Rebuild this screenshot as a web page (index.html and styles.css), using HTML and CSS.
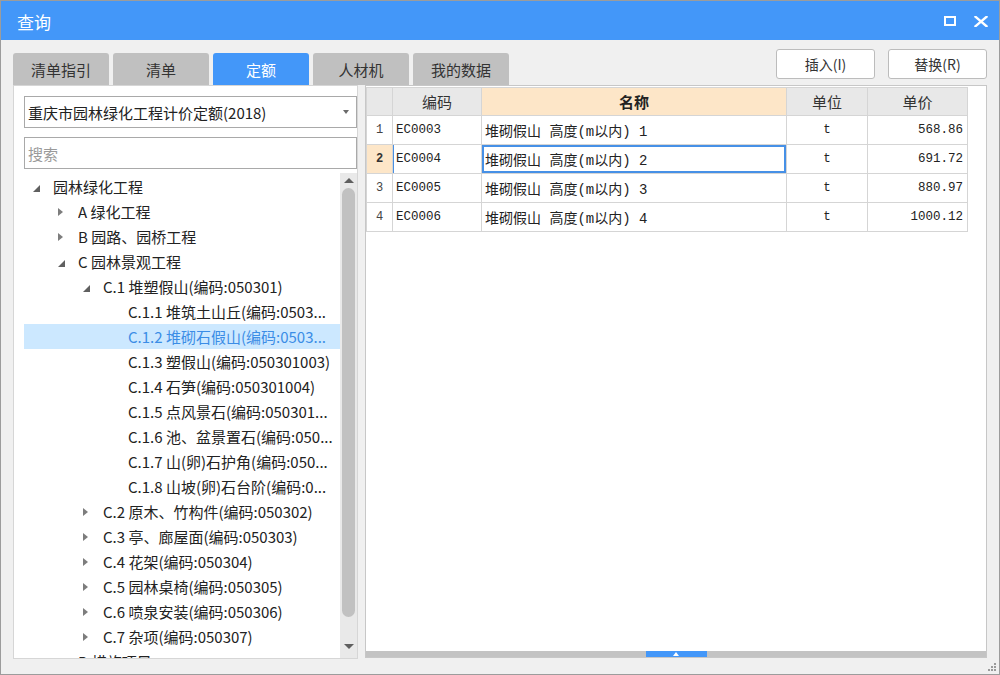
FILE: index.html
```html
<!DOCTYPE html>
<html lang="zh-CN">
<head>
<meta charset="utf-8">
<title>查询</title>
<link rel="stylesheet" href="styles.css">
</head>
<body>
<div class="window">
  <div class="titlebar">
    <span class="title">查询</span>
    <div class="win-ctrls">
      <svg class="ic-max" width="12" height="10" viewBox="0 0 12 10"><rect x="1" y="1" width="10" height="8" fill="none" stroke="#fff" stroke-width="2"/></svg>
      <svg class="ic-close" width="14" height="11" viewBox="0 0 14 11"><path d="M1.5 0.8 L12.5 10.2 M12.5 0.8 L1.5 10.2" stroke="#fff" stroke-width="2.4" stroke-linecap="square" fill="none"/></svg>
    </div>
  </div>
  <div class="content">
    <div class="toolbar">
      <div class="tabs">
        <div class="tab">清单指引</div>
        <div class="tab">清单</div>
        <div class="tab active">定额</div>
        <div class="tab">人材机</div>
        <div class="tab">我的数据</div>
      </div>
      <div class="actions">
        <button class="btn">插入(I)</button>
        <button class="btn">替换(R)</button>
      </div>
    </div>
    <div class="main">
      <div class="left-panel">
        <div class="select"><span>重庆市园林绿化工程计价定额(2018)</span><span class="caret"></span></div>
        <div class="search">搜索</div>
        <div class="tree-wrap">
          <div class="tree">
            <div class="row l0"><span class="arw exp"></span><span class="txt">园林绿化工程</span></div>
            <div class="row l1"><span class="arw col"></span><span class="txt">A 绿化工程</span></div>
            <div class="row l1"><span class="arw col"></span><span class="txt">B 园路、园桥工程</span></div>
            <div class="row l1"><span class="arw exp"></span><span class="txt">C 园林景观工程</span></div>
            <div class="row l2"><span class="arw exp"></span><span class="txt">C.1 堆塑假山(编码:050301)</span></div>
            <div class="row l3"><span class="arw"></span><span class="txt">C.1.1 堆筑土山丘(编码:0503...</span></div>
            <div class="row l3 selected"><span class="arw"></span><span class="txt">C.1.2 堆砌石假山(编码:0503...</span></div>
            <div class="row l3"><span class="arw"></span><span class="txt">C.1.3 塑假山(编码:050301003)</span></div>
            <div class="row l3"><span class="arw"></span><span class="txt">C.1.4 石笋(编码:050301004)</span></div>
            <div class="row l3"><span class="arw"></span><span class="txt">C.1.5 点风景石(编码:050301...</span></div>
            <div class="row l3"><span class="arw"></span><span class="txt">C.1.6 池、盆景置石(编码:050...</span></div>
            <div class="row l3"><span class="arw"></span><span class="txt">C.1.7 山(卵)石护角(编码:050...</span></div>
            <div class="row l3"><span class="arw"></span><span class="txt">C.1.8 山坡(卵)石台阶(编码:0...</span></div>
            <div class="row l2"><span class="arw col"></span><span class="txt">C.2 原木、竹构件(编码:050302)</span></div>
            <div class="row l2"><span class="arw col"></span><span class="txt">C.3 亭、廊屋面(编码:050303)</span></div>
            <div class="row l2"><span class="arw col"></span><span class="txt">C.4 花架(编码:050304)</span></div>
            <div class="row l2"><span class="arw col"></span><span class="txt">C.5 园林桌椅(编码:050305)</span></div>
            <div class="row l2"><span class="arw col"></span><span class="txt">C.6 喷泉安装(编码:050306)</span></div>
            <div class="row l2"><span class="arw col"></span><span class="txt">C.7 杂项(编码:050307)</span></div>
            <div class="row l1"><span class="arw col"></span><span class="txt">D 措施项目</span></div>
          </div>
          <div class="vscroll">
            <div class="sb-up"><span class="tri-up"></span></div>
            <div class="sb-thumb"></div>
            <div class="sb-down"><span class="tri-down"></span></div>
          </div>
        </div>
      </div>
      <div class="right-panel">
        <div class="grid">
          <div class="cell hd"></div>
          <div class="cell hd">编码</div>
          <div class="cell hd hl">名称</div>
          <div class="cell hd">单位</div>
          <div class="cell hd">单价</div>

          <div class="cell num">1</div>
          <div class="cell code">EC0003</div>
          <div class="cell name">堆砌假山 高度(m以内) 1</div>
          <div class="cell unit">t</div>
          <div class="cell price">568.86</div>

          <div class="cell num cur">2</div>
          <div class="cell code curcode">EC0004</div>
          <div class="cell name focus">堆砌假山 高度(m以内) 2</div>
          <div class="cell unit">t</div>
          <div class="cell price">691.72</div>

          <div class="cell num">3</div>
          <div class="cell code">EC0005</div>
          <div class="cell name">堆砌假山 高度(m以内) 3</div>
          <div class="cell unit">t</div>
          <div class="cell price">880.97</div>

          <div class="cell num">4</div>
          <div class="cell code">EC0006</div>
          <div class="cell name">堆砌假山 高度(m以内) 4</div>
          <div class="cell unit">t</div>
          <div class="cell price">1000.12</div>
        </div>
        <div class="hscroll"><div class="hthumb"><span class="tri-up small"></span></div></div>
      </div>
    </div>
  </div>
  <svg class="grip" width="10" height="10" viewBox="0 0 10 10">
    <rect x="7" y="1" width="2" height="2" fill="#9a9a9a"/>
    <rect x="4" y="4" width="2" height="2" fill="#9a9a9a"/>
    <rect x="7" y="4" width="2" height="2" fill="#9a9a9a"/>
    <rect x="1" y="7" width="2" height="2" fill="#9a9a9a"/>
    <rect x="4" y="7" width="2" height="2" fill="#9a9a9a"/>
    <rect x="7" y="7" width="2" height="2" fill="#9a9a9a"/>
  </svg>
</div>
</body>
</html>
```

FILE: styles.css
```css
body {
  margin: 0;
  font-family: "Noto Sans CJK SC", "Noto Sans", sans-serif;
}

.window {
  width: 1000px;
  height: 675px;
  box-sizing: border-box;
  border: 1px solid #9c9c9c;
  background: #f0f0f0;
  display: flex;
  flex-direction: column;
  position: relative;
  overflow: hidden;
}

/* title bar */
.titlebar {
  height: 39px;
  flex: none;
  background: #4397f9;
  display: flex;
  align-items: center;
  padding: 0 11px 0 16px;
  color: #fff;
}
.title {
  flex: 1;
  font-size: 17px;
  margin-top: 2px;
}
.win-ctrls {
  display: flex;
  align-items: center;
  gap: 18px;
  margin-top: 1px;
}
.win-ctrls svg { display: block; }

/* content */
.content {
  flex: 1;
  display: flex;
  flex-direction: column;
  padding: 0 12px 0 12px;
}

.toolbar {
  height: 45px;
  flex: none;
  display: flex;
  justify-content: space-between;
}
.tabs {
  display: flex;
  gap: 4px;
  align-self: flex-end;
}
.tab {
  width: 96px;
  height: 32px;
  background: #c0c0c0;
  border-radius: 3px 3px 0 0;
  display: flex;
  align-items: center;
  justify-content: center;
  font-size: 15px;
  color: #333;
}
.tab.active {
  background: #4397f9;
  color: #fff;
}
.actions {
  display: flex;
  gap: 13px;
  padding-top: 9px;
}
.btn {
  width: 99px;
  height: 30px;
  box-sizing: border-box;
  border: 1px solid #bcbcbc;
  border-radius: 3px;
  background: #fff;
  font-family: "Noto Sans CJK SC", "Noto Sans", sans-serif;
  font-size: 14px;
  color: #333;
  padding: 0;
}

.main {
  height: 574px;
  flex: none;
  display: flex;
  gap: 7px;
}

/* left panel */
.left-panel {
  width: 345px;
  box-sizing: border-box;
  border: 1px solid #d6d6d6;
  background: #fff;
  padding: 10px 0 0 10px;
  display: flex;
  flex-direction: column;
}
.select {
  height: 32px;
  flex: none;
  box-sizing: border-box;
  border: 1px solid #a9a9a9;
  display: flex;
  align-items: center;
  justify-content: space-between;
  padding: 0 7px 0 3px;
  font-size: 15px;
  color: #222;
}
.caret {
  width: 0;
  height: 0;
  border-top: 4px solid #6a6a6a;
  border-left: 3.5px solid transparent;
  border-right: 3.5px solid transparent;
}
.search {
  margin-top: 9px;
  height: 32px;
  flex: none;
  box-sizing: border-box;
  border: 1px solid #a9a9a9;
  display: flex;
  align-items: center;
  padding-left: 3px;
  font-size: 15px;
  color: #9a9a9a;
}
.tree-wrap {
  margin-top: 4px;
  flex: 1;
  min-height: 0;
  display: flex;
  overflow: hidden;
}
.tree {
  flex: 1;
  min-width: 0;
  padding-top: 1px;
  overflow: hidden;
}
.row {
  height: 25px;
  display: flex;
  align-items: center;
  font-size: 15px;
  color: #222;
  white-space: nowrap;
  box-sizing: border-box;
  padding-right: 2px;
}
.row.l0 { padding-left: 9px; }
.row.l1 { padding-left: 34px; }
.row.l2 { padding-left: 59px; }
.row.l3 { padding-left: 84px; }
.row.selected {
  background: #cce8ff;
  color: #3b8de6;
}
.arw {
  width: 20px;
  flex: none;
  display: flex;
  align-items: center;
}
.arw.exp::before {
  content: "";
  display: block;
  width: 0;
  height: 0;
  border-left: 7px solid transparent;
  border-bottom: 7px solid #606060;
  margin-top: 3px;
}
.arw.col::before {
  content: "";
  display: block;
  width: 0;
  height: 0;
  border-left: 5px solid #7d7d7d;
  border-top: 4px solid transparent;
  border-bottom: 4px solid transparent;
}
.txt {
  flex: 1;
  min-width: 0;
  overflow: hidden;
}

.vscroll {
  width: 17px;
  flex: none;
  background: #e9e9e9;
  display: flex;
  flex-direction: column;
  align-items: center;
}
.sb-up {
  height: 15px;
  display: flex;
  align-items: center;
  justify-content: center;
}
.tri-up {
  width: 0;
  height: 0;
  border-bottom: 5px solid #5f5f5f;
  border-left: 5px solid transparent;
  border-right: 5px solid transparent;
}
.tri-down {
  width: 0;
  height: 0;
  border-top: 5px solid #5f5f5f;
  border-left: 5px solid transparent;
  border-right: 5px solid transparent;
}
.sb-thumb {
  width: 13px;
  height: 429px;
  border-radius: 7px;
  background: #c1c1c1;
}
.sb-down {
  margin-top: auto;
  height: 16px;
  display: flex;
  align-items: flex-start;
  justify-content: center;
  padding-top: 2px;
  box-sizing: border-box;
}

/* right panel */
.right-panel {
  width: 622px;
  height: 573px;
  align-self: flex-start;
  box-sizing: border-box;
  border: 1px solid #c7c7c7;
  background: #fff;
  display: flex;
  flex-direction: column;
}
.grid {
  display: grid;
  grid-template-columns: 26px 89px 305px 81px 100px;
  grid-auto-rows: 29px;
  margin-top: 1px;
  border-left: 1px solid #d5d5d5;
  align-self: flex-start;
}
.cell {
  box-sizing: border-box;
  border-right: 1px solid #d5d5d5;
  border-bottom: 1px solid #d5d5d5;
  display: flex;
  align-items: center;
  font-family: "Liberation Mono", "Noto Sans CJK SC", monospace;
  font-size: 12.5px;
  color: #222;
  white-space: nowrap;
}
.cell.hd {
  background: #e8e8e8;
  justify-content: center;
  font-family: "Noto Sans CJK SC", "Noto Sans", sans-serif;
  font-size: 15px;
  color: #333;
  border-top: 1px solid #d5d5d5;
}
.cell.hd.hl {
  background: #fde6c8;
  font-weight: bold;
  color: #222;
}
.cell.num {
  justify-content: center;
  font-size: 12px;
  color: #444;
}
.cell.num.cur {
  background: #fde6c8;
  font-weight: bold;
  color: #333;
}
.cell.code { padding-left: 3px; }
.cell.curcode { box-shadow: inset 1px 0 0 #4a90e2; }
.cell.name {
  padding-left: 3px;
  font-size: 14px;
}
.cell.name.focus { box-shadow: inset 0 0 0 2px #4690e6; }
.cell.unit { justify-content: center; }
.cell.price {
  justify-content: flex-end;
  padding-right: 4px;
}

.hscroll {
  margin-top: auto;
  height: 6px;
  flex: none;
  background: #c3c3c3;
  display: flex;
  justify-content: center;
}
.hthumb {
  width: 61px;
  height: 6px;
  background: #4397f9;
  display: flex;
  align-items: center;
  justify-content: center;
}
.tri-up.small {
  border-bottom: 4px solid #fff;
  border-left: 3.5px solid transparent;
  border-right: 3.5px solid transparent;
}

.grip {
  position: absolute;
  right: 2px;
  bottom: 2px;
}
```
